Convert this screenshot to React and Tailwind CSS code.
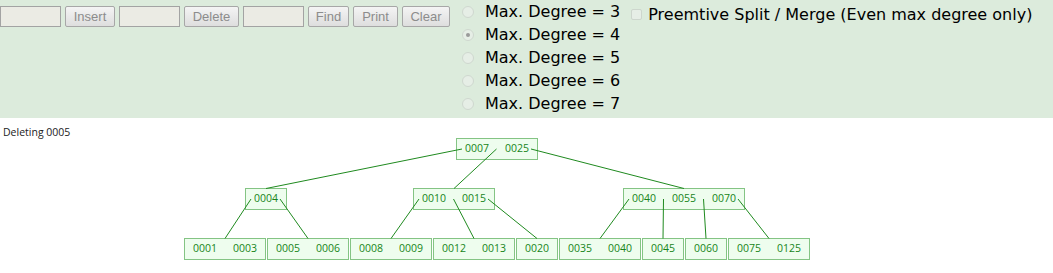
import React from "react";

const nodes = [
  { x: 456, y: 138, keys: ["0007", "0025"] },
  { x: 245, y: 188, keys: ["0004"] },
  { x: 413, y: 188, keys: ["0010", "0015"] },
  { x: 623, y: 188, keys: ["0040", "0055", "0070"] },
  { x: 184, y: 238, keys: ["0001", "0003"] },
  { x: 267, y: 238, keys: ["0005", "0006"] },
  { x: 350, y: 238, keys: ["0008", "0009"] },
  { x: 433, y: 238, keys: ["0012", "0013"] },
  { x: 516, y: 238, keys: ["0020"] },
  { x: 559, y: 238, keys: ["0035", "0040"] },
  { x: 642, y: 238, keys: ["0045"] },
  { x: 685, y: 238, keys: ["0060"] },
  { x: 728, y: 238, keys: ["0075", "0125"] },
];

// parent index -> child indices
const children = {
  0: [1, 2, 3],
  1: [4, 5],
  2: [6, 7, 8],
  3: [9, 10, 11, 12],
};

function edgeStart(node, i) {
  const n = node.keys.length;
  let off = 0;
  if (i === 0) off = 5.5;
  if (i === n) off = -5.5;
  return { x: node.x + 0.5 + 40 * i + off, y: node.y + 11 };
}

function edgeEnd(node) {
  const w = 40 * node.keys.length + 1;
  return { x: node.x + 0.5 + w / 2, y: node.y + 0.5 };
}

function Radio({ checked, label }) {
  return (
    <div className="flex h-[23px] items-center">
      <span className="ml-[0px] flex h-[12px] w-[12px] items-center justify-center rounded-full border border-[#cfd8cf] bg-[#e6eee6]">
        {checked && <span className="h-[4px] w-[4px] rounded-full bg-[#9a9a9a]" />}
      </span>
      <span className="ml-[11px] whitespace-nowrap text-[16px] text-black">{label}</span>
    </div>
  );
}

function Btn({ label, w }) {
  return (
    <button
      className={`${w} h-[21px] rounded-[2px] border border-[#a7a7a7] bg-gradient-to-b from-[#f4f4f4] to-[#dedede] text-center text-[13px] leading-none text-[#8c8c8c]`}
    >
      {label}
    </button>
  );
}

function Field() {
  return <div className="h-[21px] w-[61px] border border-[#a3a3a3] bg-[#ebebe4]" />;
}

export default function App() {
  return (
    <div className="h-[273px] w-[1053px] overflow-hidden bg-white">
      {/* controls */}
      <div className="flex h-[118px] items-start bg-[#dcebdc]">
        <div className="flex items-center gap-[4px] pt-[6px] font-['Liberation_Sans',Arial,sans-serif]">
          <Field />
          <Btn label="Insert" w="w-[50px]" />
          <Field />
          <Btn label="Delete" w="w-[55px]" />
          <Field />
          <Btn label="Find" w="w-[41px]" />
          <Btn label="Print" w="w-[45px]" />
          <Btn label="Clear" w="w-[48px]" />
        </div>

        <div className="ml-[12px] flex flex-col font-['DejaVu_Sans',Verdana,sans-serif]">
          <Radio label="Max. Degree = 3" />
          <Radio label="Max. Degree = 4" checked />
          <Radio label="Max. Degree = 5" />
          <Radio label="Max. Degree = 6" />
          <Radio label="Max. Degree = 7" />
        </div>

        <div className="ml-[11px] mt-[3px] flex h-[23px] items-center font-['DejaVu_Sans',Verdana,sans-serif]">
          <span className="h-[11px] w-[11px] rounded-[2px] border border-[#cdd6cd] bg-[#e6eee6]" />
          <span className="ml-[6px] whitespace-nowrap text-[16px] text-black">
            Preemtive Split / Merge (Even max degree only)
          </span>
        </div>
      </div>

      {/* tree canvas */}
      <svg width="1053" height="155" viewBox="0 118 1053 155" className="block">
        <text x="3" y="136" fontSize="10.5" fill="#222" fontFamily="'Open Sans', sans-serif">
          Deleting 0005
        </text>

        {nodes.map((n, i) => (
          <rect
            key={"r" + i}
            x={n.x + 0.5}
            y={n.y + 0.5}
            width={40 * n.keys.length + 1}
            height={21}
            fill="#eefdee"
            stroke="#84c484"
          />
        ))}

        {Object.entries(children).map(([p, kids]) =>
          kids.map((c, i) => {
            const a = edgeStart(nodes[p], i);
            const b = edgeEnd(nodes[c]);
            return (
              <line
                key={p + "-" + c}
                x1={a.x}
                y1={a.y}
                x2={b.x}
                y2={b.y}
                stroke="#1f8a1f"
                strokeWidth="1"
              />
            );
          })
        )}

        {nodes.map((n, i) =>
          n.keys.map((k, j) => (
            <text
              key={"t" + i + j}
              x={n.x + 0.5 + 40 * j + 20.5}
              y={n.y + 14}
              textAnchor="middle"
              fontSize="10.5"
              fill="#17851a"
              fontFamily="'Open Sans', sans-serif"
            >
              {k}
            </text>
          ))
        )}
      </svg>
    </div>
  );
}
